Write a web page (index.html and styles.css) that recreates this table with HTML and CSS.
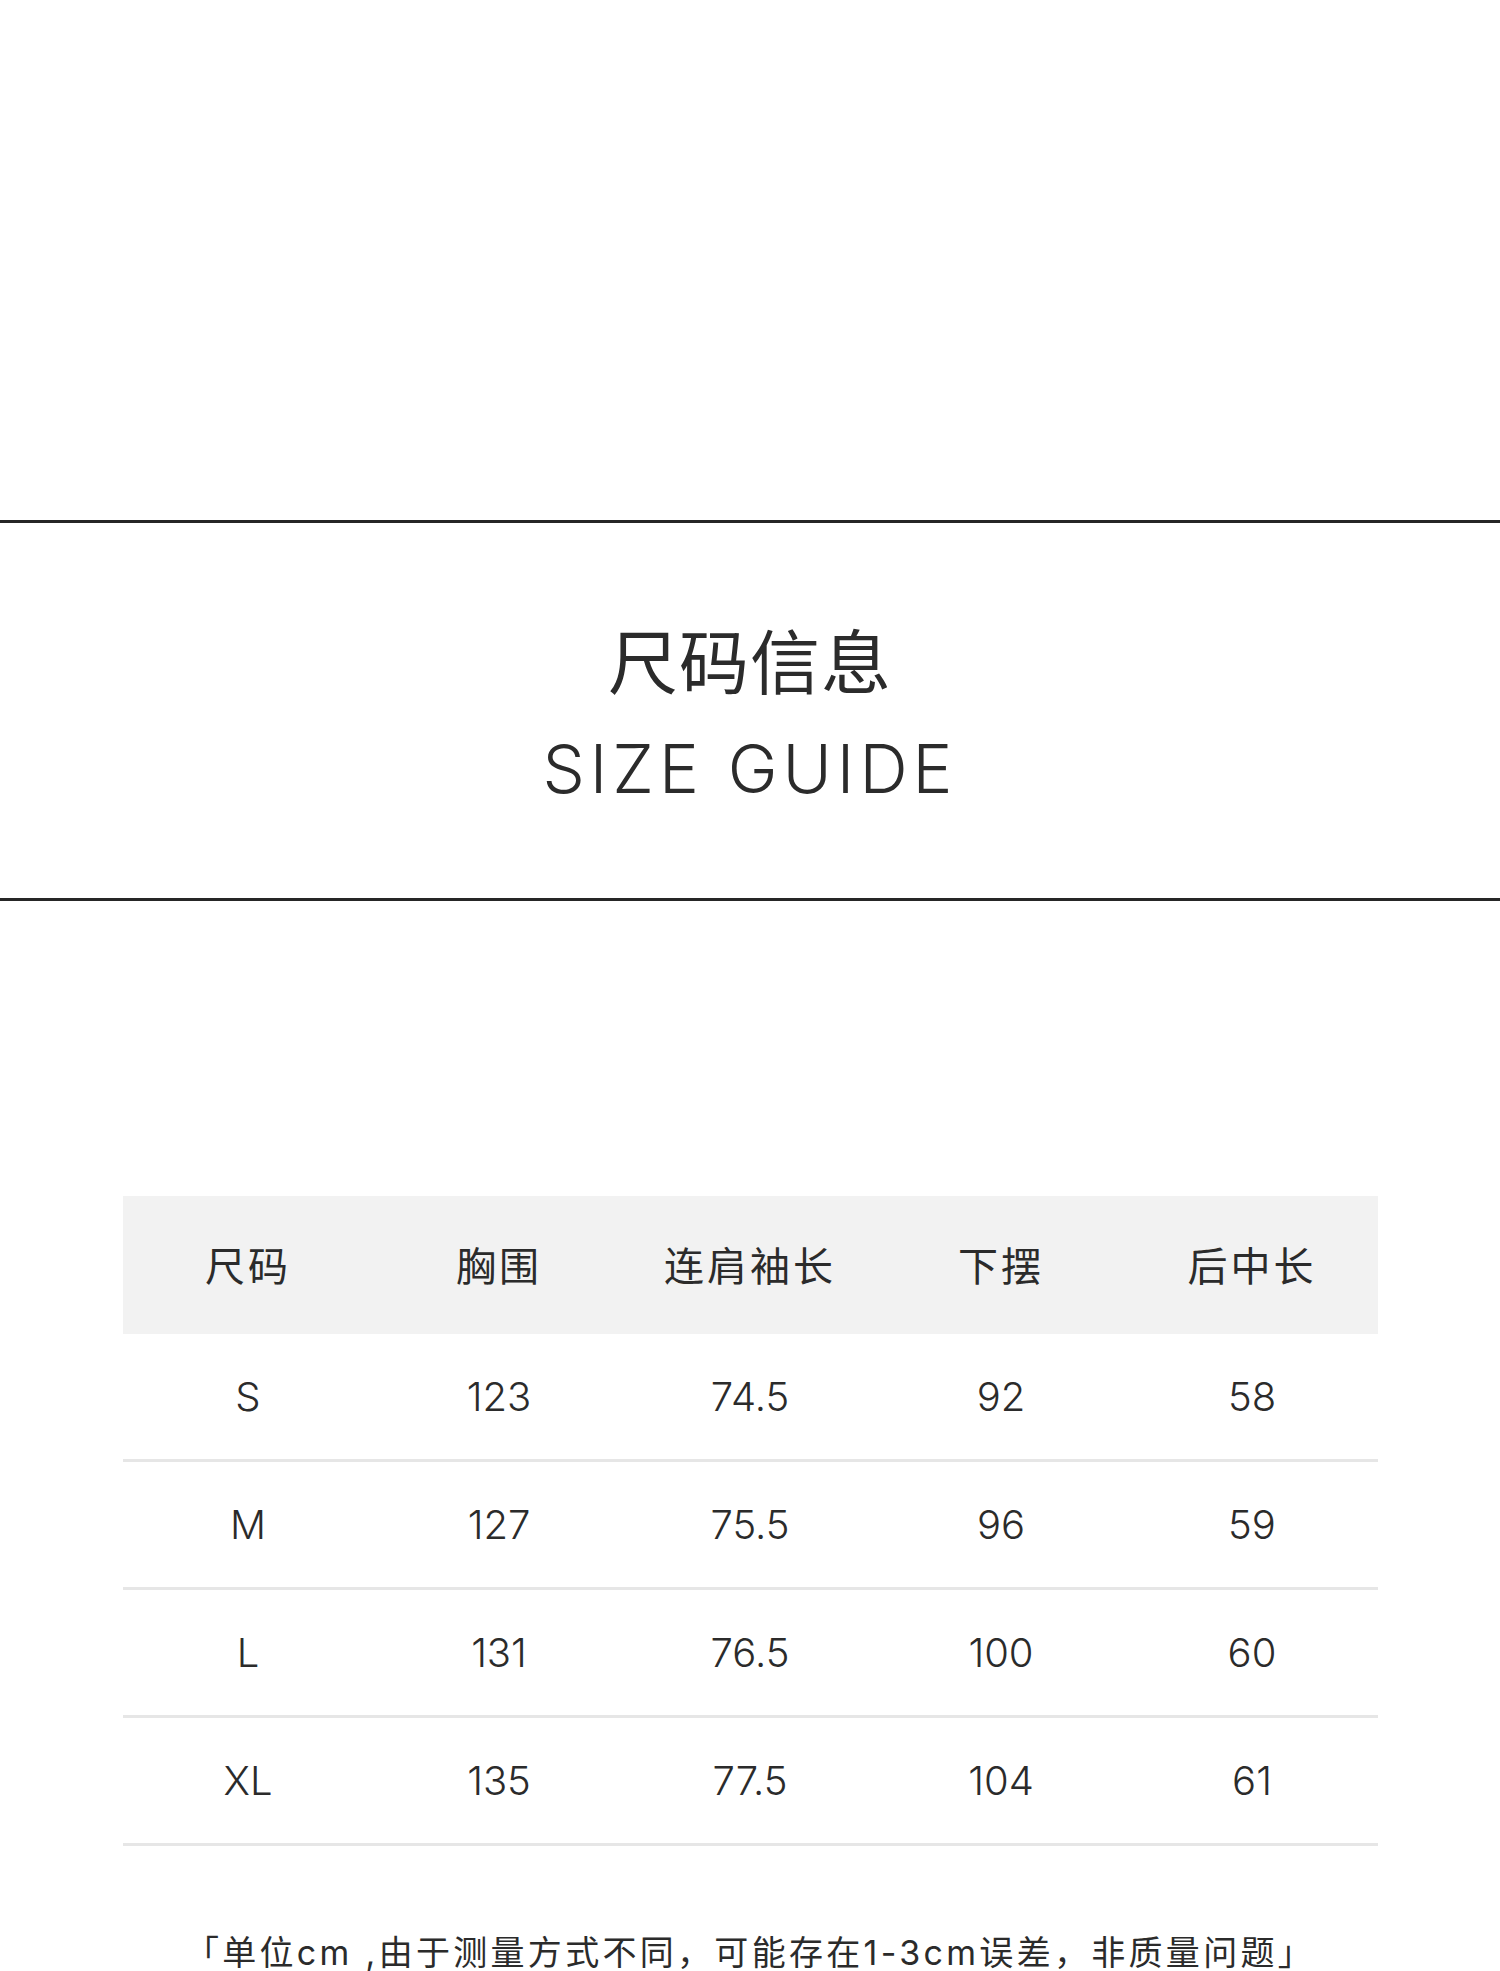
FILE: index.html
```html
<!DOCTYPE html>
<html lang="zh-CN">
<head>
<meta charset="utf-8">
<title>尺码信息 SIZE GUIDE</title>
<link rel="stylesheet" href="styles.css">
</head>
<body>
<div class="page">
  <div class="top-space"></div>
  <section class="title-band">
    <h1 class="title-cn">尺码信息</h1>
    <h2 class="title-en">SIZE GUIDE</h2>
  </section>
  <table class="size-table">
    <thead>
      <tr><th>尺码</th><th>胸围</th><th>连肩袖长</th><th>下摆</th><th>后中长</th></tr>
    </thead>
    <tbody>
      <tr><td>S</td><td>123</td><td>74.5</td><td>92</td><td>58</td></tr>
      <tr><td>M</td><td>127</td><td>75.5</td><td>96</td><td>59</td></tr>
      <tr><td>L</td><td>131</td><td>76.5</td><td>100</td><td>60</td></tr>
      <tr><td>XL</td><td>135</td><td>77.5</td><td>104</td><td>61</td></tr>
    </tbody>
  </table>
  <p class="note">「单位cm ,由于测量方式不同，可能存在1-3cm误差，非质量问题」</p>
</div>
</body>
</html>
```
FILE: styles.css
```css
html, body {
  margin: 0;
  padding: 0;
  background: #ffffff;
}
body {
  font-family: Inter, "Noto Sans CJK SC", sans-serif;
  color: #2b2b2b;
}
.page {
  width: 1500px;
  height: 1971px;
  overflow: hidden;
}
.top-space {
  height: 520px;
}
.title-band {
  border-top: 3px solid #262626;
  border-bottom: 3px solid #262626;
  height: 375px;
  box-sizing: content-box;
  display: flex;
  flex-direction: column;
  align-items: center;
}
.title-cn {
  margin: 101px 0 0;
  font-family: "Noto Sans CJK SC", sans-serif;
  font-size: 70px;
  line-height: 70px;
  font-weight: 400;
  letter-spacing: 1px;
}
.title-en {
  margin: 41px 0 0;
  font-family: Inter, sans-serif;
  font-size: 67px;
  line-height: 67px;
  font-weight: 300;
  letter-spacing: 5px;
}
.size-table {
  margin: 295px auto 0;
  width: 1255px;
  border-collapse: collapse;
  table-layout: fixed;
}
.size-table th,
.size-table td {
  text-align: center;
  padding: 0;
  font-size: 40px;
  color: #2b2b2b;
}
.size-table th {
  background: #f2f2f2;
  height: 135px;
  padding-bottom: 3px;
  font-family: "Noto Sans CJK SC", sans-serif;
  font-weight: 400;
  letter-spacing: 3px;
}
.size-table td {
  height: 125px;
  border-bottom: 3px solid #e6e6e6;
  font-family: Inter, sans-serif;
  font-weight: 300;
}
.note {
  margin: 90px 0 0;
  text-align: center;
  font-size: 34px;
  line-height: 34px;
  letter-spacing: 3.3px;
  font-family: Inter, "Noto Sans CJK SC", sans-serif;
  font-weight: 400;
}
```
